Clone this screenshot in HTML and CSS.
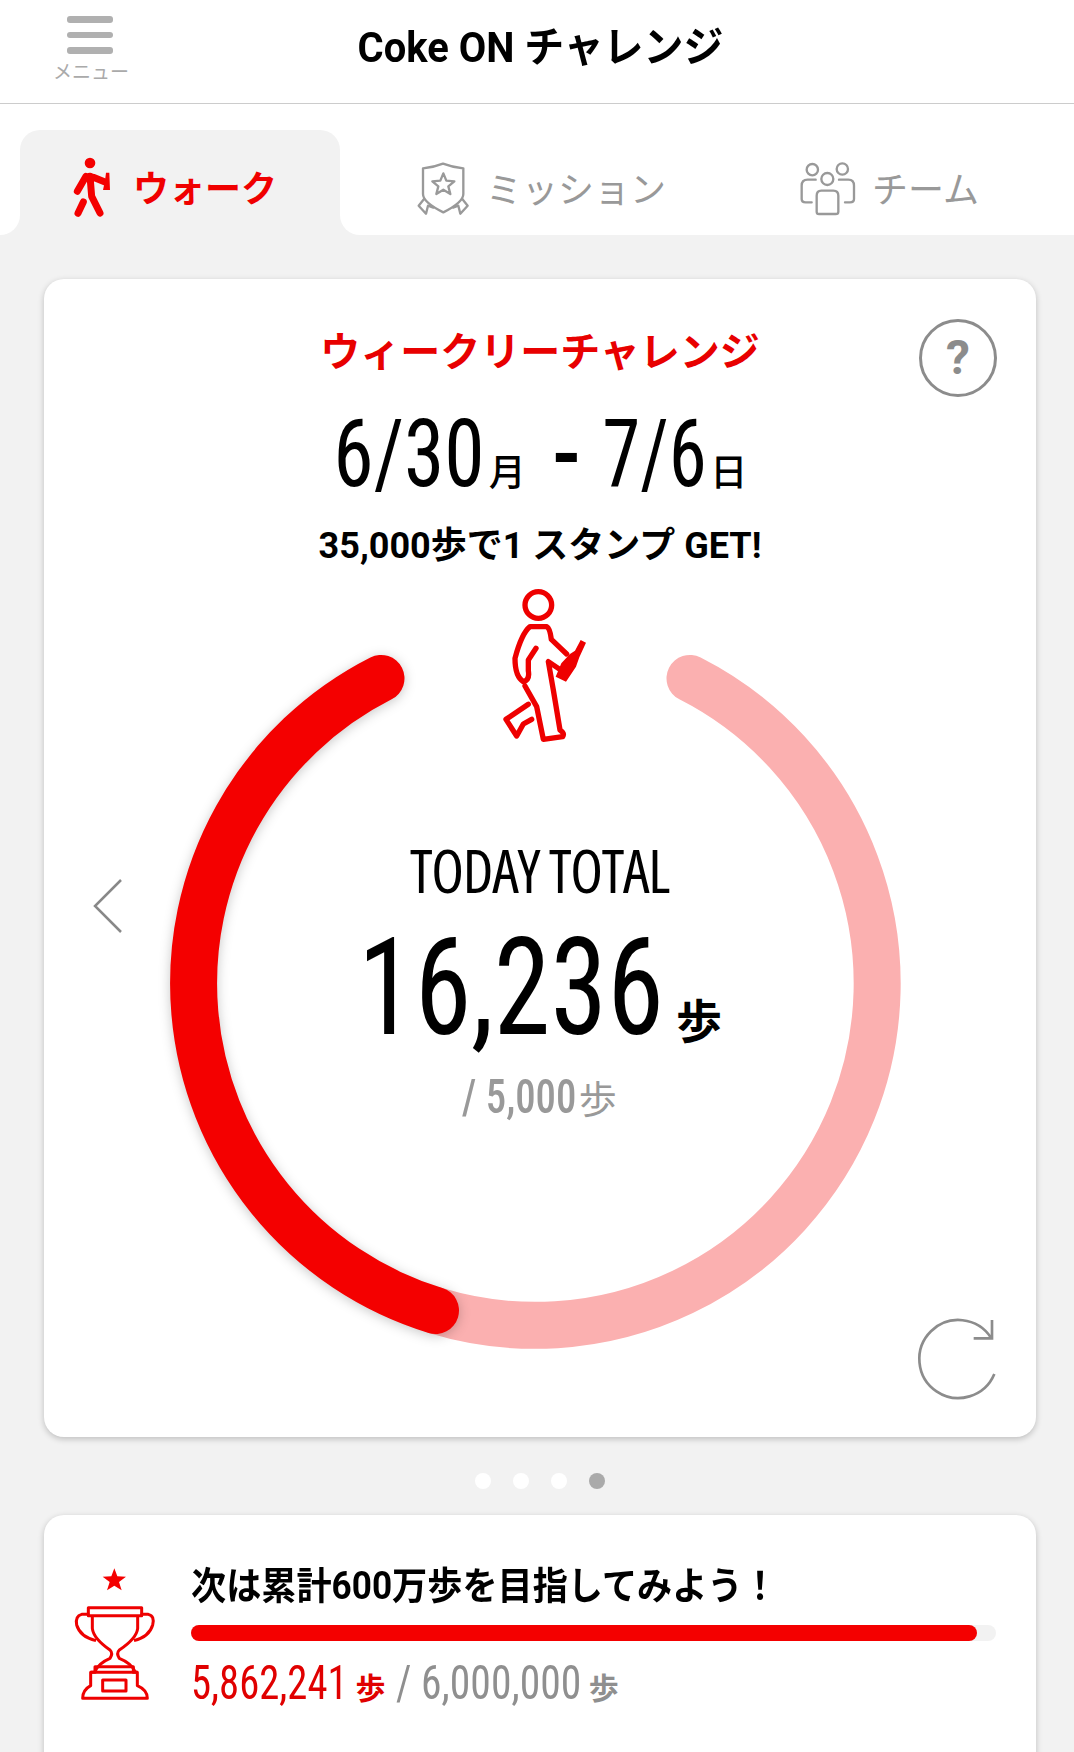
FILE: index.html
```html
<!DOCTYPE html>
<html lang="ja">
<head>
<meta charset="utf-8">
<title>Coke ON チャレンジ</title>
<link rel="stylesheet" href="styles.css">
</head>
<body>
<header class="topbar">
  <div class="menu">
    <div class="burger"><span></span><span></span><span></span></div>
    <div class="menu-label">メニュー</div>
  </div>
  <h1 class="title"><span class="squeeze">Coke ON チャレンジ</span></h1>
</header>

<nav class="tabs">
  <div class="tab-edge"></div>
  <div class="tab-slot">
    <div class="tab-active">
      <svg class="icon-walker" viewBox="0 0 210 225">
        <circle cx="120" cy="45" r="16" fill="#f40000"/>
        <path d="M120 85L125 145L150 195M108 85L82 130M130 88L165 102M100 162L84 196" fill="none" stroke="#f40000" stroke-width="21" stroke-linecap="round" stroke-linejoin="round"/>
        <path d="M168 74H178L180 126H159L165 98Z" fill="#f40000"/>
      </svg>
      <span class="tab-text-on">ウォーク</span>
    </div>
  </div>
  <div class="tab-rest">
    <div class="tab-item tab-mission">
      <svg class="icon-tab icon-mission" viewBox="0 0 240 240">
        <g fill="none" stroke="#999" stroke-width="7" stroke-linejoin="round">
          <path d="M57 58Q90 55 117 44Q145 55 178 58V135Q178 160 118 190Q57 160 57 135Z"/>
          <path d="M118 73L127 95L151 97L133 112L139 135L118 122L97 135L103 112L85 97L109 95Z"/>
          <path d="M62 148L44 170L66 194L72 170L90 177"/>
          <path d="M173 148L191 170L169 194L163 170L145 177"/>
        </g>
      </svg>
      <span class="tab-text">ミッション</span>
    </div>
    <div class="tab-item">
      <svg class="icon-tab icon-team" viewBox="0 0 240 240">
        <g fill="none" stroke="#999" stroke-width="7" stroke-linecap="round">
          <circle cx="70" cy="62" r="17"/>
          <circle cx="160" cy="60" r="17"/>
          <circle cx="115" cy="90" r="18"/>
          <path d="M80 92H56Q38 92 38 110V150Q38 160 50 160H68"/>
          <path d="M150 92H178Q195 92 195 110V150Q195 160 183 160H168"/>
          <path d="M97 125H133Q148 125 148 140V188Q148 195 140 195H90Q83 195 83 188V140Q83 125 97 125Z"/>
        </g>
      </svg>
      <span class="tab-text">チーム</span>
    </div>
  </div>
</nav>

<main class="content">
  <section class="card">
    <button class="help" type="button">?</button>
    <div class="card-head">
      <h2 class="weekly">ウィークリーチャレンジ</h2>
      <div class="dates"><span class="date-a">6/30</span><b>月</b><span class="dash">-</span><span class="date-b">7/6</span><b>日</b></div>
      <p class="goal">35,000歩で1 スタンプ GET!</p>
    </div>
    <div class="ring">
      <svg class="ring-svg" viewBox="0 0 730 768">
        <path d="M520 98.4A342 342 0 0 1 265.5 730.5" fill="none" stroke="#fbb0b0" stroke-width="47" stroke-linecap="round"/>
        <path class="ring-red" d="M265.5 730.5A342 342 0 0 1 211 98.4" fill="none" stroke="#f40000" stroke-width="47" stroke-linecap="round"/>
        <g transform="translate(320 0) scale(.3333)">
          <circle cx="145" cy="75" r="40" fill="none" stroke="#ee0000" stroke-width="16"/>
          <path d="M138 205L115 240V272Q120 300 100 305Q75 290 75 235Q95 160 120 140H170Q180 145 184 178L230 222M215 272L175 245L190 330L210 450Q225 460 218 470L160 478L140 380L105 318M115 373L48 418L80 468L100 432L125 418" fill="none" stroke="#ee0000" stroke-width="16" stroke-linecap="round" stroke-linejoin="round"/>
          <path d="M272 180L288 188L268 232L258 260L228 305L197 290L214 250L240 222L255 212Z" fill="#ee0000"/>
        </g>
      </svg>
      <div class="today">
        <div class="today-label">TODAY TOTAL</div>
        <div class="today-num"><span class="num-main">16,236</span><b>歩</b></div>
        <div class="today-goal"><span class="goal-num">/ 5,000</span><span class="goal-unit">歩</span></div>
      </div>
    </div>
    <svg class="prev" viewBox="0 0 30 54"><path d="M28 1L2 27L28 53" fill="none" stroke="#888" stroke-width="2.5"/></svg>
    <svg class="refresh" viewBox="0 0 450 450">
      <path d="M340 252A117 117 0 1 1 330 143M333 90V145H278" fill="none" stroke="#8c8c8c" stroke-width="8"/>
    </svg>
  </section>

  <div class="dots"><i></i><i></i><i></i><i class="dot-on"></i></div>

  <section class="card-next">
    <svg class="trophy" viewBox="0 0 330 480">
      <path d="M163 40L172 64L198 65L177 81L185 106L163 92L141 106L149 81L128 65L154 64Z" fill="#f40000"/>
      <g fill="none" stroke="#ee0000" stroke-width="9" stroke-linejoin="round">
        <path d="M85 158H245V182H85Z"/>
        <path d="M97 182V220Q100 250 150 285Q160 295 150 310Q115 325 105 350M233 182V220Q230 250 178 285Q168 295 178 310Q215 325 225 350"/>
        <path d="M88 178H65Q45 183 50 210Q60 245 108 257M242 178H265Q285 183 278 210Q268 245 222 257"/>
        <path d="M105 335H220V352H232V392Q262 405 262 430H68Q68 405 92 392V352H105Z"/>
        <path d="M92 352H232"/>
        <path d="M128 375H198V408H128Z"/>
      </g>
    </svg>
    <div class="next-body">
      <h3 class="next-title"><span class="squeeze">次は累計600万歩を目指してみよう！</span></h3>
      <div class="bar"><div class="bar-fill" style="width:97.7%"></div></div>
      <div class="next-count">
        <span class="count-red">5,862,241</span><b class="unit-red">歩</b>
        <span class="count-gray">/ 6,000,000</span><b class="unit-gray">歩</b>
      </div>
    </div>
  </section>
</main>
</body>
</html>
```
FILE: styles.css
```css
* { box-sizing: border-box; }
html, body { margin: 0; height: 1752px; overflow: hidden; }
body {
  background: #f2f2f2;
  color: #000;
  font-family: "Roboto", "Noto Sans CJK JP", sans-serif;
}
h1, h2, h3, p { margin: 0; }

.squeeze { display: inline-block; transform: scaleX(.95); white-space: nowrap; }

.topbar {
  height: 104px;
  background: #fff;
  border-bottom: 1px solid #ccc;
  display: grid;
  grid-template-columns: 1fr auto 1fr;
  align-items: start;
}
.menu { padding: 16px 0 0 53px; width: 127px; }
.burger { display: flex; flex-direction: column; gap: 9px; align-items: center; }
.burger span { width: 46px; height: 6.5px; border-radius: 3px; background: #b0b0b0; }
.menu-label { margin-top: 9px; font-size: 19px; line-height: 20px; color: #aaa; text-align: center; white-space: nowrap; }
.title { font-size: 42px; line-height: 50px; font-weight: 700; padding: 23px 0 0 7px; grid-column: 2; }

.tabs { display: flex; height: 131px; }
.tab-edge { width: 20px; background: #fff; border-bottom-right-radius: 20px; }
.tab-slot { width: 320px; background: #fff; padding-top: 26px; }
.tab-active {
  height: 105px;
  background: #f2f2f2;
  border-radius: 20px 20px 0 0;
  display: flex;
  align-items: center;
  padding: 0 0 0 30px;
}
.icon-walker { width: 70px; height: 75px; margin-top: 6px; }
.tab-text-on { margin: 14px 0 0 13px; font-size: 36px; line-height: 50px; font-weight: 700; color: #f00000; }
.tab-rest {
  flex: 1;
  background: #fff;
  border-bottom-left-radius: 20px;
  display: flex;
  align-items: center;
  padding: 38px 0 0 64px;
}
.tab-item { display: flex; align-items: center; }
.tab-mission { width: 385px; }
.icon-tab { width: 80px; height: 80px; }
.icon-mission { margin-right: 2px; }
.icon-team { margin-right: 3px; }
.tab-text { margin-top: 4px; font-size: 36px; line-height: 50px; color: #999; font-weight: 400; }

.content { padding: 44px 38px 0 44px; }
.card {
  position: relative;
  height: 1158px;
  background: #fff;
  border-radius: 20px;
  box-shadow: 0 2px 6px rgba(0,0,0,.22);
}
.card-head { height: 301px; padding-top: 49px; text-align: center; }
.weekly { font-size: 40px; line-height: 50px; font-weight: 700; color: #e80000; }
.dates {
  margin-top: 16px;
  height: 120px;
  display: flex;
  justify-content: center;
  align-items: baseline;
  font-family: "Roboto", sans-serif;
  font-stretch: 75%;
  font-weight: 400;
  font-size: 95px;
  line-height: 120px;
}
.date-a { display: inline-block; transform: scaleX(.86); margin: 0 -8px 0 -12px; }
.date-b { display: inline-block; transform: scaleX(.81); margin: 0 -9px 0 -13px; }
.dates b { font-family: "Noto Sans CJK JP", sans-serif; font-size: 37px; font-weight: 500; }
.dash { margin: 0 22px 0 26px; font-weight: 500; }
.goal { margin-top: 7px; font-size: 36px; line-height: 50px; font-weight: 700; }

.ring { display: grid; width: 730px; height: 768px; margin-left: 126px; }
.ring-svg, .today { grid-area: 1 / 1; }
.ring-svg { width: 730px; height: 768px; overflow: visible; }
.ring-red { filter: drop-shadow(0 2px 6px rgba(0,0,0,.22)); }
.today { text-align: center; padding: 255px 0 0 9px; }
.today-label { font-family: "Open Sans", sans-serif; font-stretch: 75%; font-size: 60px; line-height: 70px; letter-spacing: -1.3px; }
.today-num { margin-top: 24px; font-family: "Roboto", sans-serif; font-stretch: 75%; font-weight: 400; font-size: 135px; line-height: 118px; }
.num-main { display: inline-block; transform: scaleX(.85); margin: 0 -26px; }
.today-num b { margin-left: 11px; font-family: "Noto Sans CJK JP", sans-serif; font-size: 46px; font-weight: 700; vertical-align: -4px; }
.today-goal { margin-top: 2px; font-family: "Roboto", sans-serif; font-stretch: 75%; font-weight: 500; font-size: 48px; line-height: 36px; color: #999; }
.goal-num { display: inline-block; transform: scaleX(.85); margin: 0 -10px; }
.goal-unit { margin-left: 2px; font-family: "Noto Sans CJK JP", sans-serif; font-size: 38px; font-weight: 400; }

.help {
  position: absolute;
  left: 875px;
  top: 40px;
  width: 78px;
  height: 78px;
  padding: 0;
  border: 3px solid #8c8c8c;
  border-radius: 50%;
  background: none;
  color: #8c8c8c;
  font: 700 48px/70px "Roboto", sans-serif;
}
.prev { position: absolute; left: 49px; top: 600px; width: 30px; height: 54px; }
.refresh { position: absolute; left: 837px; top: 1011px; width: 150px; height: 150px; }

.dots { display: flex; justify-content: center; gap: 22px; height: 16px; margin-top: 36px; padding-right: 1px; }
.dots i { width: 16px; height: 16px; border-radius: 50%; background: #fff; }
.dots i.dot-on { background: #aaa; }

.card-next {
  margin-top: 26px;
  height: 300px;
  background: #fff;
  border-radius: 20px;
  box-shadow: 0 2px 6px rgba(0,0,0,.22);
  display: flex;
  align-items: flex-start;
  padding: 46px 40px 0 16px;
}
.trophy { width: 110px; height: 160px; margin-top: -6px; flex: none; }
.next-body { flex: 1; margin-left: 21px; }
.next-title { font-size: 38px; line-height: 46px; font-weight: 700; margin-top: 2px; }
.next-title .squeeze { transform: scaleX(.925); transform-origin: left; }
.bar { margin-top: 16px; height: 16px; background: #f2f2f2; border-radius: 8px; }
.bar-fill { height: 16px; background: #f40000; border-radius: 8px; }
.next-count { margin-top: 14px; display: flex; align-items: baseline; font-family: "Roboto", sans-serif; font-stretch: 75%; font-weight: 400; font-size: 49px; line-height: 56px; }
.count-red { display: inline-block; transform: scaleX(.83); transform-origin: left; color: #e00000; margin-right: -34px; }
.count-gray { display: inline-block; transform: scaleX(.85); transform-origin: left; color: #8f8f8f; margin: 0 -35px 0 10px; }
.unit-red, .unit-gray { font-family: "Noto Sans CJK JP", sans-serif; font-size: 30px; margin-left: 10px; }
.unit-red { color: #e00000; }
.unit-gray { color: #8f8f8f; }
```
